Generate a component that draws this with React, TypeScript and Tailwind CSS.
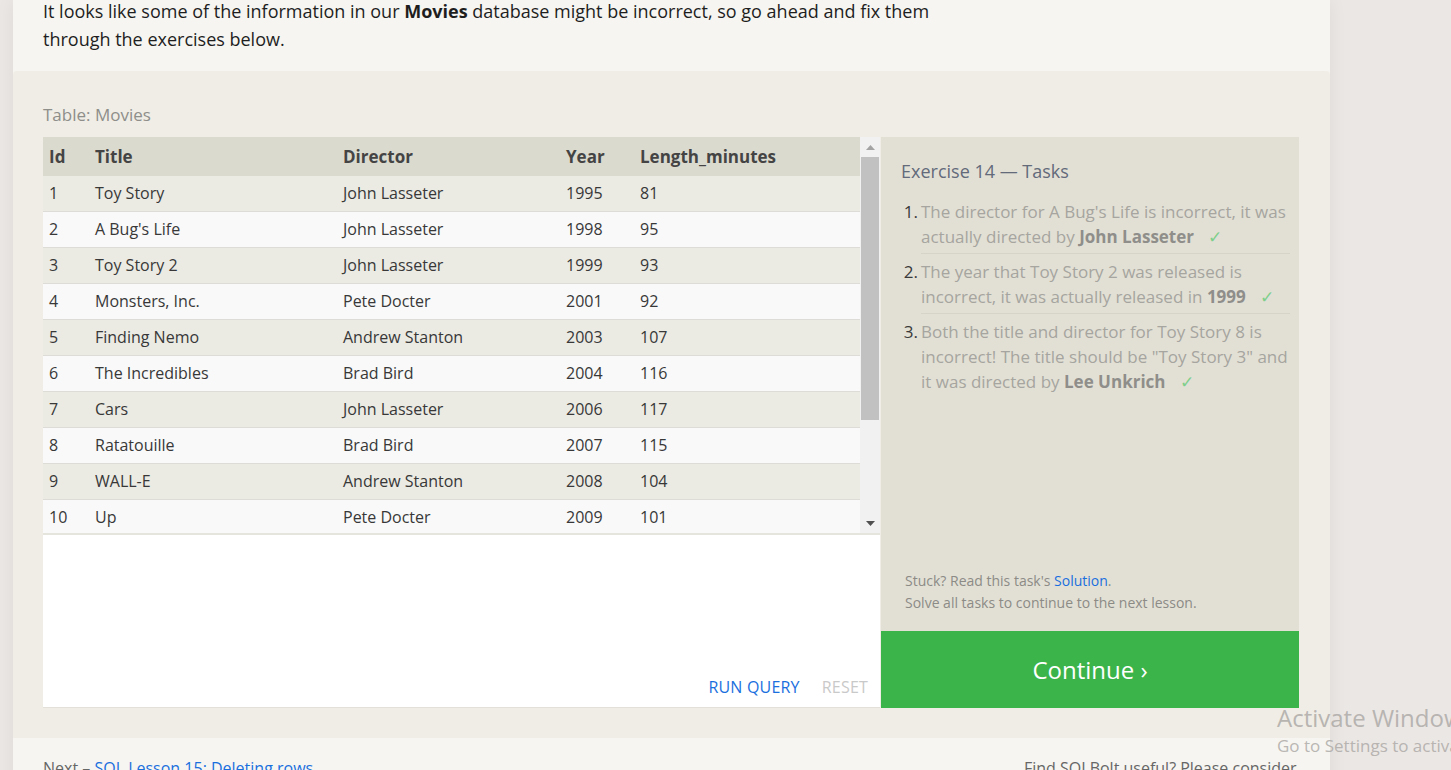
import React from "react";

const movies = [
  [1, "Toy Story", "John Lasseter", 1995, 81],
  [2, "A Bug's Life", "John Lasseter", 1998, 95],
  [3, "Toy Story 2", "John Lasseter", 1999, 93],
  [4, "Monsters, Inc.", "Pete Docter", 2001, 92],
  [5, "Finding Nemo", "Andrew Stanton", 2003, 107],
  [6, "The Incredibles", "Brad Bird", 2004, 116],
  [7, "Cars", "John Lasseter", 2006, 117],
  [8, "Ratatouille", "Brad Bird", 2007, 115],
  [9, "WALL-E", "Andrew Stanton", 2008, 104],
  [10, "Up", "Pete Docter", 2009, 101],
  [11, "Toy Story 3", "Lee Unkrich", 2010, 103],
  [12, "Cars 2", "John Lasseter", 2011, 120],
  [13, "Brave", "Brenda Chapman", 2012, 102],
  [14, "Monsters University", "Dan Scanlon", 2013, 110],
];

const cols = ["w-[46px]", "w-[248px]", "w-[223px]", "w-[74px]", "flex-1"];

function Check() {
  return <span className="ml-[14px] text-[#7fcf8c]">✓</span>;
}

function Tasks() {
  const items = [
    <>
      The director for A Bug's Life is incorrect, it was actually directed by{" "}
      <b className="font-bold text-[#8f8e8a]">John Lasseter</b>
      <Check />
    </>,
    <>
      The year that Toy Story 2 was released is incorrect, it was actually released in{" "}
      <b className="font-bold text-[#8f8e8a]">1999</b>
      <Check />
    </>,
    <>
      Both the title and director for Toy Story 8 is incorrect! The title should be "Toy Story 3"
      and it was directed by <b className="font-bold text-[#8f8e8a]">Lee Unkrich</b>
      <Check />
    </>,
  ];
  return (
    <div className="mt-[15px] flex flex-col">
      {items.map((it, i) => (
        <div key={i} className="flex">
          <span
            className={
              "w-[20px] shrink-0 pr-[3px] text-right leading-[25px] text-[#3a3a3a] " +
              (i > 0 ? "pt-[5px]" : "")
            }
          >
            {i + 1}.
          </span>
          <div
            className={
              "w-[369px] pb-[4px] leading-[25px] text-[#a6a59f] " +
              (i > 0 ? "pt-[5px] " : "") +
              (i < items.length - 1 ? "border-b border-[#d6d4c9]" : "")
            }
          >
            {it}
          </div>
        </div>
      ))}
    </div>
  );
}

export default function App() {
  return (
    <div
      className="relative min-h-screen overflow-hidden bg-[#ebe7e4] text-[#222]"
      style={{ fontFamily: '"Open Sans", "Noto Sans", sans-serif' }}
    >
      <div className="ml-[13px] w-[1317px] bg-[#f6f5f1] shadow-[0_0_18px_rgba(0,0,0,0.06)]">
        {/* intro text */}
        <div className="flow-root h-[71px] px-[30px]">
          <p className="-mt-[3px] w-[920px] text-[18px] leading-[28px] text-[#1e1e1e]">
            It looks like some of the information in our <b className="font-bold">Movies</b> database
            might be incorrect, so go ahead and fix them through the exercises below.
          </p>
        </div>

        {/* exercise */}
        <div className="rounded-t-[4px] bg-[#efede6] px-[30px] pt-[32px] pb-[30px]">
          <div className="mb-[10px] text-[17px] leading-[24px] text-[#8e8e8a]">Table: Movies</div>
          <div className="flex gap-[1px]">
            {/* left: table + editor */}
            <div className="flex w-[837px] flex-col">
              <div className="flex h-[398px] overflow-hidden border-b-2 border-[#e6e5dd]">
                <div className="w-[817px]">
                  <div className="flex h-[39px] items-center bg-[#dbdacf] text-[17px] font-bold text-[#444]">
                    {["Id", "Title", "Director", "Year", "Length_minutes"].map((h, i) => (
                      <div key={h} className={cols[i] + " pl-[6px]"}>
                        {h}
                      </div>
                    ))}
                  </div>
                  {movies.map((m, r) => (
                    <div
                      key={r}
                      className={
                        "flex h-[36px] items-center border-b border-[#dedcd6] pb-[1px] text-[16px] " +
                        (r % 2 === 0 ? "bg-[#ebeae3]" : "bg-[#f9f9f9]")
                      }
                    >
                      {m.map((v, i) => (
                        <div key={i} className={cols[i] + " pl-[6px] text-[#383838]"}>
                          {String(v)}
                        </div>
                      ))}
                    </div>
                  ))}
                </div>
                {/* scrollbar */}
                <div className="flex w-[20px] flex-col bg-[#f1f1f1]">
                  <div className="flex h-[20px] items-center justify-center">
                    <svg width="9" height="5" viewBox="0 0 9 5">
                      <path d="M4.5 0L9 5H0z" fill="#a3a3a3" />
                    </svg>
                  </div>
                  <div className="mx-[1px] h-[263px] bg-[#c1c1c1]" />
                  <div className="flex-1" />
                  <div className="flex h-[20px] items-center justify-center">
                    <svg width="9" height="5" viewBox="0 0 9 5">
                      <path d="M0 0H9L4.5 5z" fill="#505050" />
                    </svg>
                  </div>
                </div>
              </div>
              <div className="flex h-[173px] items-end justify-end gap-[22px] border-b border-[#e2e0d8] bg-white pr-[12px] pb-[9px] text-[16px] uppercase leading-[22px] tracking-[0.2px]">
                <span className="text-[#1a6fde]">Run Query</span>
                <span className="text-[#c9c9c9]">Reset</span>
              </div>
            </div>

            {/* right: tasks */}
            <div className="flex w-[418px] flex-col bg-[#e2e0d5]">
              <div className="flex-1 pt-[21px] pl-[20px] text-[17px]">
                <h2 className="text-[18px] leading-[26px] text-[#636a7a]">Exercise 14 — Tasks</h2>
                <Tasks />
              </div>
              <div className="pl-[24px] pb-[17px] text-[14px] leading-[22px] text-[#8c8b86]">
                <div>
                  Stuck? Read this task's <span className="text-[#1a6fde]">Solution</span>.
                </div>
                <div>Solve all tasks to continue to the next lesson.</div>
              </div>
              <div className="flex h-[77px] items-center justify-center bg-[#3bb44a] text-[24px] text-white">
                Continue ›
              </div>
            </div>
          </div>
        </div>

        {/* footer */}
        <div className="flex justify-between px-[30px] pt-[18px] pb-[20px] text-[16px] leading-[24px] text-[#666]">
          <div>
            Next – <span className="text-[#1a6fde]">SQL Lesson 15: Deleting rows</span>
          </div>
          <div className="w-[276px]">Find SQLBolt useful? Please consider</div>
        </div>
      </div>

      {/* windows watermark */}
      <div className="pointer-events-none absolute left-[1277px] top-[702px] whitespace-nowrap text-[#a9a6a3]/80">
        <div className="text-[24px] leading-[32px]">Activate Windows</div>
        <div className="text-[17px] leading-[24px]">Go to Settings to activate Windows.</div>
      </div>
    </div>
  );
}
